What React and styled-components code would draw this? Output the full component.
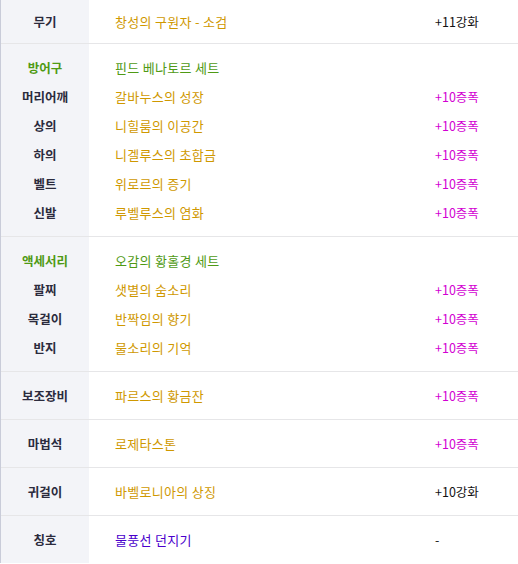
import React from "react"
import styled, { createGlobalStyle } from "styled-components"

const GlobalStyle = createGlobalStyle`
  html, body {
    margin: 0;
    padding: 0;
    background: #fff;
  }
  body {
    font-family: "Noto Sans CJK KR", "Noto Sans", sans-serif;
    font-size: 12px;
  }
`

const colors = {
  label: "#2b2b3d",
  set: "#4f9a14",
  item: "#cf9800",
  title: "#4a00cc",
  star: "#d200d2",
  plain: "#111",
}

const Table = styled.div`
  width: 518px;
  border-left: 1px solid #c9ccd9;
  box-sizing: border-box;
`

const Section = styled.section`
  display: grid;
  grid-template-columns: 88px 1fr;
  border-bottom: 1px solid #e6e6e8;
  &:last-child {
    border-bottom: none;
  }
`

const LabelCol = styled.div`
  background: #f3f4f8;
  padding: ${p => (p.$top ? "7px 0 7px" : "9px 0")};
`

const BodyCol = styled.div`
  padding: ${p => (p.$top ? "7px 0 7px" : "9px 0")};
`

const Label = styled.div`
  height: 29px;
  line-height: 29px;
  text-align: center;
  font-weight: bold;
  font-size: 12.5px;
  color: ${p => (p.$set ? colors.set : colors.label)};
`

const Row = styled.div`
  height: 29px;
  display: grid;
  grid-template-columns: 320px 1fr;
  align-items: center;
  padding-left: 26px;
`

const Name = styled.span`
  font-size: 13px;
  letter-spacing: 0.3px;
  color: ${p => colors[p.$tone] || colors.item};
`

const Value = styled.span`
  font-size: 12.5px;
  color: ${p => (p.$star ? colors.star : colors.plain)};
`

const data = [
  {
    rows: [{ label: "무기", name: "창성의 구원자 - 소검", value: "+11강화" }],
  },
  {
    rows: [
      { label: "방어구", name: "핀드 베나토르 세트", set: true },
      { label: "머리어깨", name: "갈바누스의 성장", value: "+10증폭", star: true },
      { label: "상의", name: "니힐룸의 이공간", value: "+10증폭", star: true },
      { label: "하의", name: "니겔루스의 초합금", value: "+10증폭", star: true },
      { label: "벨트", name: "위로르의 증기", value: "+10증폭", star: true },
      { label: "신발", name: "루벨루스의 염화", value: "+10증폭", star: true },
    ],
  },
  {
    rows: [
      { label: "액세서리", name: "오감의 황홀경 세트", set: true },
      { label: "팔찌", name: "샛별의 숨소리", value: "+10증폭", star: true },
      { label: "목걸이", name: "반짝임의 향기", value: "+10증폭", star: true },
      { label: "반지", name: "물소리의 기억", value: "+10증폭", star: true },
    ],
  },
  { rows: [{ label: "보조장비", name: "파르스의 황금잔", value: "+10증폭", star: true }] },
  { rows: [{ label: "마법석", name: "로제타스톤", value: "+10증폭", star: true }] },
  { rows: [{ label: "귀걸이", name: "바벨로니아의 상징", value: "+10강화" }] },
  { rows: [{ label: "칭호", name: "물풍선 던지기", value: "-", tone: "title" }] },
]

const App = () => (
  <>
    <GlobalStyle />
    <Table>
      {data.map((section, i) => (
        <Section key={i}>
          <LabelCol $top={i === 0}>
            {section.rows.map(r => (
              <Label key={r.label} $set={r.set}>{r.label}</Label>
            ))}
          </LabelCol>
          <BodyCol $top={i === 0}>
            {section.rows.map(r => (
              <Row key={r.label}>
                <Name $tone={r.set ? "set" : r.tone}>{r.name}</Name>
                <Value $star={r.star}>{r.value}</Value>
              </Row>
            ))}
          </BodyCol>
        </Section>
      ))}
    </Table>
  </>
)

export default App
